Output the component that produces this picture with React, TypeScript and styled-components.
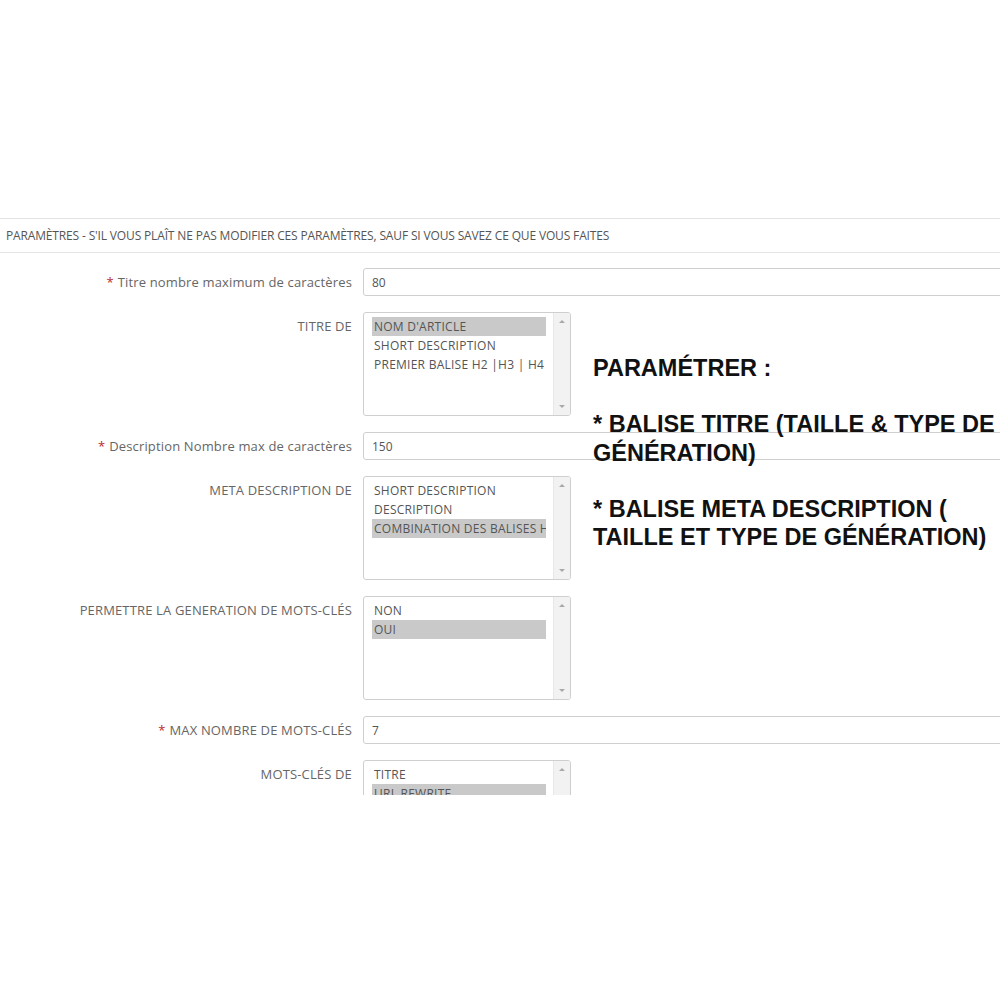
import React from "react";
import styled, { createGlobalStyle } from "styled-components";

const Global = createGlobalStyle`
  html, body { margin: 0; padding: 0; background: #fff; overflow: hidden; }
  body { font-family: "Open Sans", "DejaVu Sans", sans-serif; }
`;

const Page = styled.div`
  position: relative;
  width: 1000px;
  height: 1000px;
  padding-top: 218px;
  box-sizing: border-box;
`;

const Panel = styled.section`
  height: 577px;
  overflow: hidden;
`;

const PanelHeading = styled.div`
  height: 33px;
  border-top: 1px solid #e4e4e4;
  border-bottom: 1px solid #e4e4e4;
  display: flex;
  align-items: center;
  padding-left: 6px;
  font-size: 12px;
  letter-spacing: -0.15px;
  color: #555;
  text-transform: uppercase;
  white-space: nowrap;
`;

const Form = styled.div`
  display: flex;
  flex-direction: column;
  gap: 16px;
  padding-top: 15px;
`;

const Row = styled.div`
  display: flex;
  align-items: flex-start;
  gap: 11px;
`;

const Label = styled.div`
  width: 352px;
  flex: none;
  text-align: right;
  padding-top: 5px;
  line-height: 18px;
  font-size: 13px;
  color: #666;
  letter-spacing: 0.15px;
  white-space: nowrap;
`;

const Req = styled.span`
  color: #c0282d;
  margin-right: 4px;
`;

const Input = styled.div`
  flex: 1;
  margin-right: -20px;
  height: 28px;
  box-sizing: border-box;
  border: 1px solid #cfcfcf;
  border-radius: 3px;
  padding: 0 8px;
  display: flex;
  align-items: center;
  font-size: 12px;
  color: #555;
`;

const ListBox = styled.div`
  width: 208px;
  height: 104px;
  box-sizing: border-box;
  border: 1px solid #cfcfcf;
  border-radius: 3px;
  display: flex;
  overflow: hidden;
`;

const Options = styled.div`
  flex: 1;
  min-width: 0;
  padding: 4px 7px 4px 8px;
  display: flex;
  flex-direction: column;
`;

const Option = styled.div<{ $selected?: boolean }>`
  height: 19px;
  line-height: 19px;
  padding-left: 2px;
  font-size: 12px;
  letter-spacing: 0.25px;
  color: #555;
  white-space: nowrap;
  overflow: hidden;
  background: ${(p) => (p.$selected ? "#c9c9c9" : "transparent")};
`;

const Scrollbar = styled.div`
  width: 17px;
  flex: none;
  background: #f2f2f2;
  border-left: 1px solid #e8e8e8;
  display: flex;
  flex-direction: column;
  justify-content: space-between;
  align-items: center;
  padding: 7px 0;
  box-sizing: border-box;
`;

const Arrow = styled.div<{ $down?: boolean }>`
  width: 0;
  height: 0;
  border-left: 3px solid transparent;
  border-right: 3px solid transparent;
  ${(p) =>
    p.$down
      ? "border-top: 3px solid #a8a8a8;"
      : "border-bottom: 3px solid #a8a8a8;"}
`;

const Overlay = styled.div`
  position: absolute;
  left: 593px;
  top: 354px;
  font-family: "Liberation Sans", Arial, sans-serif;
  font-weight: bold;
  font-size: 23.5px;
  line-height: 28.2px;
  color: #111;
  white-space: pre;
`;

type Field =
  | { kind: "input"; label: string; req?: boolean; value: string }
  | { kind: "list"; label: string; options: string[]; selected: number };

const fields: Field[] = [
  { kind: "input", label: "Titre nombre maximum de caractères", req: true, value: "80" },
  {
    kind: "list",
    label: "TITRE DE",
    options: ["NOM D'ARTICLE", "SHORT DESCRIPTION", "PREMIER BALISE H2 |H3 | H4"],
    selected: 0,
  },
  { kind: "input", label: "Description Nombre max de caractères", req: true, value: "150" },
  {
    kind: "list",
    label: "META DESCRIPTION DE",
    options: ["SHORT DESCRIPTION", "DESCRIPTION", "COMBINATION DES BALISES H2 | H3"],
    selected: 2,
  },
  {
    kind: "list",
    label: "PERMETTRE LA GENERATION DE MOTS-CLÉS",
    options: ["NON", "OUI"],
    selected: 1,
  },
  { kind: "input", label: "MAX NOMBRE DE MOTS-CLÉS", req: true, value: "7" },
  {
    kind: "list",
    label: "MOTS-CLÉS DE",
    options: ["TITRE", "URL REWRITE", "DESCRIPTION"],
    selected: 1,
  },
];

export default function App() {
  return (
    <>
      <Global />
      <Page>
        <Panel>
          <PanelHeading>
            Paramètres - S'il vous plaît ne pas modifier ces paramètres, sauf si vous savez ce que vous faites
          </PanelHeading>
          <Form>
            {fields.map((f, i) => (
              <Row key={i}>
                <Label>
                  {f.kind === "input" && f.req && <Req>*</Req>}
                  {f.label}
                </Label>
                {f.kind === "input" ? (
                  <Input>{f.value}</Input>
                ) : (
                  <ListBox>
                    <Options>
                      {f.options.map((o, j) => (
                        <Option key={j} $selected={j === f.selected}>
                          {o}
                        </Option>
                      ))}
                    </Options>
                    <Scrollbar>
                      <Arrow />
                      <Arrow $down />
                    </Scrollbar>
                  </ListBox>
                )}
              </Row>
            ))}
          </Form>
        </Panel>
        <Overlay>
          {"PARAMÉTRER :\n\n* BALISE TITRE (TAILLE & TYPE DE\nGÉNÉRATION)\n\n* BALISE META DESCRIPTION (\nTAILLE ET TYPE DE GÉNÉRATION)"}
        </Overlay>
      </Page>
    </>
  );
}
